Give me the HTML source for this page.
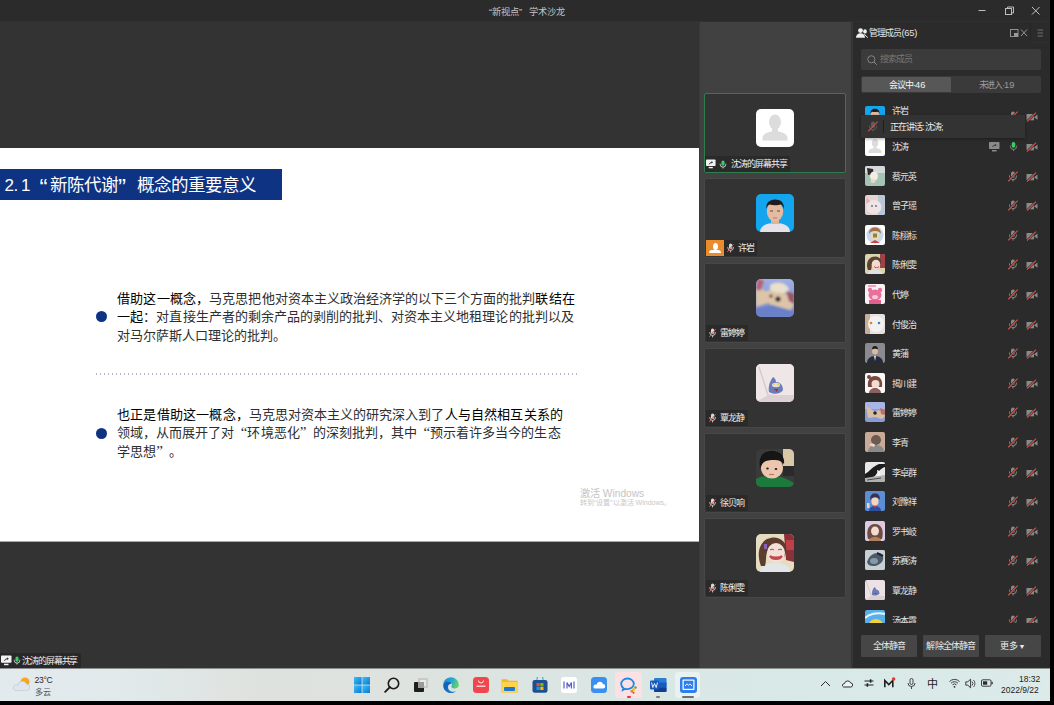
<!DOCTYPE html>
<html lang="zh-CN">
<head>
<meta charset="utf-8">
<style>
*{margin:0;padding:0;box-sizing:border-box}
html,body{width:1054px;height:705px;overflow:hidden;background:#000;font-family:"Liberation Sans",sans-serif}
.abs{position:absolute}
#app{position:absolute;left:0;top:0;width:1050px;height:701px;background:#333;overflow:hidden}
#titlebar{left:0;top:0;width:1050px;height:22px;background:#2b2b2b;border-bottom:1px solid #303030}
.ttl{top:1px;height:22px;line-height:22px;color:#c6c6c6;font-size:9.2px;white-space:nowrap}
#main{left:0;top:22px;width:699px;height:646px;background:#333}
#slide{left:0;top:148px;width:699px;height:394px;background:#fff;border-bottom:1px solid #aaa}
#col{left:699px;top:22px;width:152px;height:646px;background:#414141;border-left:1px solid #383838}
#panel{left:852px;top:22px;width:198px;height:646px;background:#2b2b2b;border-left:1px solid #363636}
#taskbar{left:0;top:668px;width:1050px;height:33px;background:linear-gradient(90deg,#e2eaee 0%,#e1e9eb 12%,#dee2de 25%,#dde3de 40%,#dbe6e4 55%,#d9e8e6 68%,#d8e9e7 80%,#dcebea 100%);border-top:1px solid #8c8f8e}

.slide-title{left:0;top:169px;width:282px;height:31px;background:#0e3383}
.st{position:absolute;color:#fff;font-size:17.5px;line-height:31px;top:0;white-space:nowrap}
.para{position:absolute;left:117px;font-family:"Liberation Serif",serif;font-size:13.06px;line-height:18.3px;color:#2e2e2e;letter-spacing:0.04px;font-weight:350;white-space:nowrap}
.qo{display:inline-block;width:13.1px;text-align:right;font-size:1.15em;line-height:10px}.qc{display:inline-block;width:13.1px;text-align:left;font-size:1.15em;line-height:10px}
.para b{font-weight:500;color:#000;letter-spacing:0.19px}
.bullet{position:absolute;width:11px;height:11px;border-radius:50%;background:#0e3383}
.dots{position:absolute;left:96px;top:373px;width:482px;height:2px;background:repeating-linear-gradient(90deg,#b2b9c7 0 1.5px,transparent 1.5px 4px)}
.wm1{position:absolute;left:580px;top:485px;font-size:10.2px;color:#c4c4c4;white-space:nowrap}
.wm2{position:absolute;left:580px;top:497px;font-size:7px;color:#c8c8c8;white-space:nowrap}

.tile{position:absolute;left:704px;width:142px;height:80px;background:#333;border:1px solid #474747;border-radius:2px}
.tile.act{border-color:#2f7d4d}
.tav{position:absolute;left:51px;top:15px;width:38px;height:38px;border-radius:5px;overflow:hidden}.tav svg{display:block}
.tlab{position:absolute;left:0;bottom:0;height:16px;background:#2a2a2a;color:#eee;font-size:9px;letter-spacing:-0.9px;line-height:16px;white-space:nowrap}
.ph{position:absolute;font-size:9px;line-height:12px;color:#e6e6e6;white-space:nowrap;letter-spacing:-1px}
.srch{left:861px;top:49px;width:180px;height:21px;background:#3b3b3b;border-radius:2px}
.tabs{left:861px;top:76px;width:180px;height:17px;background:#3a3a3a;border-radius:2px}
.tabon{position:absolute;left:1px;top:1px;width:89px;height:15px;background:#575757;border-radius:1px}
.row{position:absolute;left:865px;width:180px;height:20px}
.av{position:absolute;left:0;top:0;width:20px;height:20px;border-radius:2px;overflow:hidden}
.nm{position:absolute;left:27px;top:1px;line-height:20px;font-size:9px;letter-spacing:-1px;color:#e2e2e2;white-space:nowrap}
.ic{position:absolute}
.btn{position:absolute;top:635px;width:56px;height:22px;background:#464646;border-radius:1px;color:#ededed;font-size:9px;letter-spacing:-0.8px;line-height:22px;text-align:center;white-space:nowrap}
.tip{left:861px;top:115px;width:164px;height:23px;background:#333333;box-shadow:0 1px 3px rgba(0,0,0,.35)}

.tb-ico{position:absolute;top:677px;width:16px;height:16px}
.tray{position:absolute}
</style>
</head>
<body>
<svg width="0" height="0" style="position:absolute">
<defs>
<filter id="sb" x="-10%" y="-10%" width="120%" height="120%"><feGaussianBlur stdDeviation="0.45"/></filter>
<symbol id="micoff" viewBox="0 0 10 11"><rect x="3" y="0.5" width="4" height="6.5" rx="2" fill="#8a8a8a"/><path d="M1.5 4.5v0.8a3.5 3.5 0 0 0 7 0v-0.8" stroke="#8a8a8a" stroke-width="1" fill="none"/><path d="M5 8.8v1.7" stroke="#8a8a8a" stroke-width="1"/><path d="M0.3 10.3L9.7 0.6" stroke="#2b2b2b" stroke-width="2.2"/><path d="M0.3 10.3L9.7 0.6" stroke="#dc5548" stroke-width="1.1"/></symbol>
<symbol id="micon" viewBox="0 0 10 11"><rect x="3" y="0.5" width="4" height="6.5" rx="2" fill="#3ccb62"/><path d="M1.5 4.5v0.8a3.5 3.5 0 0 0 7 0v-0.8" stroke="#8a8a8a" stroke-width="1" fill="none"/><path d="M5 8.8v1.7" stroke="#8a8a8a" stroke-width="1"/></symbol>
<symbol id="camoff" viewBox="0 0 12 10"><rect x="0.5" y="2" width="7.5" height="6.3" fill="#8a8a8a"/><path d="M8 5.2L11.5 2.6V7.8Z" fill="#8a8a8a"/><path d="M1 9.6L10 0.6" stroke="#2b2b2b" stroke-width="2.2"/><path d="M1 9.6L10 0.6" stroke="#dc5548" stroke-width="1.1"/></symbol>
<symbol id="share" viewBox="0 0 11 10"><rect x="0" y="0" width="10.5" height="7" rx="0.8" fill="#8a8a8a"/><rect x="3" y="8" width="4.5" height="1.5" fill="#8a8a8a"/><path d="M3.5 5 Q4 3 6.5 3" stroke="#333" stroke-width="0.9" fill="none"/><path d="M6 1.8L7.6 3L6 4.2Z" fill="#333"/></symbol>
<symbol id="shareW" viewBox="0 0 11 10"><rect x="0" y="0" width="10.5" height="7.2" rx="0.8" fill="#f2f2f2"/><rect x="3" y="8.2" width="4.5" height="1.5" fill="#f2f2f2"/><path d="M3.5 5.4 Q4 3.2 6.5 3.2" stroke="#333" stroke-width="1" fill="none"/><path d="M6 1.8L7.8 3.2L6 4.6Z" fill="#333"/></symbol>
<symbol id="micoffW" viewBox="0 0 7 10"><rect x="2" y="0.5" width="3.2" height="5.5" rx="1.6" fill="#d8d8d8"/><path d="M0.8 4v0.6a2.8 2.8 0 0 0 5.6 0v-0.6" stroke="#d8d8d8" stroke-width="0.9" fill="none"/><path d="M3.6 7.6v1.8" stroke="#d8d8d8" stroke-width="0.9"/><path d="M0.3 9L6.6 1.2" stroke="#d9534f" stroke-width="1"/></symbol>
<symbol id="micoffD" viewBox="0 0 10 11"><rect x="3" y="0.5" width="4" height="6.5" rx="2" fill="#5c5c5c"/><path d="M1.5 4.5v0.8a3.5 3.5 0 0 0 7 0v-0.8" stroke="#5c5c5c" stroke-width="1" fill="none"/><path d="M5 8.8v1.7" stroke="#5c5c5c" stroke-width="1"/><path d="M0.3 10.3L9.7 0.6" stroke="#c9504c" stroke-width="1.1"/></symbol>
<symbol id="miconW" viewBox="0 0 10 11"><rect x="3" y="0.5" width="4" height="6.5" rx="2" fill="#3ccb62"/><path d="M1.5 4.5v0.8a3.5 3.5 0 0 0 7 0v-0.8" stroke="#d8d8d8" stroke-width="1.1" fill="none"/><path d="M5 8.8v1.7" stroke="#d8d8d8" stroke-width="1.1"/></symbol>
</defs></svg>
<div id="app">
  <div id="titlebar" class="abs"></div>
  <span class="abs ttl" style="left:489px">“新视点”</span><span class="abs ttl" style="left:528.8px">学术沙龙</span>
  <div id="main" class="abs"></div>
  <div id="slide" class="abs"></div>

  <div class="abs slide-title">
    <span class="st" style="left:4.5px;top:1px;font-size:17px">2</span>
    <span class="st" style="left:13.5px;top:1px;font-size:17px">.</span>
    <span class="st" style="left:21px;top:1px;font-size:17px">1</span>
    <span class="st" style="left:39.5px;top:3px;font-size:24px">“</span>
    <span class="st" style="left:49.5px;top:1px">新陈代谢</span>
    <span class="st" style="left:118px;top:3px;font-size:24px">”</span>
    <span class="st" style="left:137px;top:1px">概念的重要意义</span>
  </div>
  <div class="bullet" style="left:95.5px;top:310.5px"></div>
  <div class="para" style="top:290px"><b>借助这一概念，</b>马克思把他对资本主义政治经济学的以下三个方面的批判<b>联结在</b><br><b>一起</b>：对直接生产者的剩余产品的剥削的批判、对资本主义地租理论的批判以及<br>对马尔萨斯人口理论的批判。</div>
  <div class="dots"></div>
  <div class="bullet" style="left:95.5px;top:427.5px"></div>
  <div class="para" style="top:406px"><b>也正是借助这一概念，</b>马克思对资本主义的研究深入到了<b>人与自然相互关系的</b><br>领域，从而展开了对<span class="qo">“</span>环境恶化<span class="qc">”</span>的深刻批判，其中<span class="qo">“</span>预示着许多当今的生态<br>学思想<span class="qc">”</span>。</div>
  <div class="wm1">激活 Windows</div>
  <div class="wm2">转到“设置”以激活 Windows。</div>
  <div id="col" class="abs"></div>
  <div id="panel" class="abs"></div>
<div class="tile act" style="top:93px"><div class="tav"><svg width="38" height="38" viewBox="0 0 38 38"><rect width="38" height="38" fill="#fff"/><ellipse cx="19" cy="13" rx="6" ry="7.5" fill="#dcdcdc"/><path d="M16.5 19h5l0.8 3.5c5.5 1 9.2 3 9.2 6.5v2.5h-25v-2.5c0-3.5 3.7-5.5 9.2-6.5z" fill="#dcdcdc"/></svg></div><div class="tlab" style="width:85px"><svg class="ic" style="left:1px;top:3px" width="10" height="10"><use href="#shareW"/></svg><svg class="ic" style="left:14px;top:2.5px" width="8" height="11"><use href="#miconW"/></svg><span style="position:absolute;left:25.5px;top:0">沈涛的屏幕共享</span></div></div>
<div class="tile " style="top:178px"><div class="tav"><svg width="38" height="38" viewBox="0 0 38 38"><defs><filter id="bl" x="-10%" y="-10%" width="120%" height="120%"><feGaussianBlur stdDeviation="0.6"/></filter></defs><rect width="38" height="38" fill="#13a6ee"/><g filter="url(#bl)"><path d="M4 38c0-6 6-9 15-9s15 3 15 9z" fill="#e6e2ea"/><rect x="15" y="24" width="8" height="6" fill="#dcb49a"/><ellipse cx="19" cy="17.5" rx="8.2" ry="10" fill="#e4bba0"/><path d="M10.3 15c-0.5-6 3-9.5 8.7-9.5s9.5 3 8.8 9.5c-1-3-2-4.5-3-4.5c-3 1-8 1-11.5 0c-1.3 0.5-2.5 2-3 4.5z" fill="#231c1a"/><path d="M14 17h3M21 17h3" stroke="#503a30" stroke-width="0.9"/><path d="M17 24h4" stroke="#a86a5a" stroke-width="0.8"/></g></svg></div><div style="position:absolute;left:1px;bottom:1px;width:18px;height:16px;background:#e98c2c"><div style="position:absolute;left:6.5px;top:3px;width:5px;height:7px;border-radius:50%;background:#fff"></div><div style="position:absolute;left:3px;top:10px;width:12px;height:3px;border-radius:4px 4px 0 0;background:#fff"></div></div><div class="tlab" style="left:19px;width:33px;bottom:1px"><svg class="ic" style="left:3px;top:3px" width="7" height="10"><use href="#micoffW"/></svg><span style="position:absolute;left:14px;top:0">许岩</span></div></div>
<div class="tile " style="top:263px"><div class="tav"><svg width="38" height="38" viewBox="0 0 38 38"><defs><filter id="b3"><feGaussianBlur stdDeviation="0.8"/></filter><linearGradient id="sk3" x1="0" y1="0" x2="0" y2="1"><stop offset="0" stop-color="#a2b0e4"/><stop offset="1" stop-color="#6f86cc"/></linearGradient></defs><rect width="38" height="38" fill="url(#sk3)"/><g filter="url(#b3)"><path d="M0 8l10 4l8-2l14 6l6 10l-4 6l-12-2l-10-6l-12 4z" fill="#dcc4a8"/><path d="M14 6c6-4 14-3 18 2c2 3 0 6-4 6c-5 0-11-1-14-3z" fill="#eadfcc"/><path d="M2 0l6 2l-4 10l-4-2z" fill="#b86070"/><path d="M30 12l8 3v10l-5-3z" fill="#9a5468"/><circle cx="22" cy="20" r="2.6" fill="#2a2020"/><circle cx="15" cy="17" r="1.6" fill="#3a2a24"/><path d="M0 30l16-4l22 6v6h-38z" fill="#6a80c8"/></g></svg></div><div class="tlab" style="width:42px;bottom:1px;left:1px"><svg class="ic" style="left:3px;top:3px" width="7" height="10"><use href="#micoffW"/></svg><span style="position:absolute;left:14px;top:0">雷婷婷</span></div></div>
<div class="tile " style="top:348px"><div class="tav"><svg width="38" height="38" viewBox="0 0 38 38"><defs><filter id="b4"><feGaussianBlur stdDeviation="0.7"/></filter></defs><rect width="38" height="38" fill="#ece2e4"/><g filter="url(#b4)"><path d="M0 0h38v38h-38z" fill="#efe6e8"/><path d="M3 3l9 28l26 3" fill="none" stroke="#d8cacd" stroke-width="1.5"/><path d="M0 38l12-7h26v7z" fill="#ddd0d3"/><path d="M13 28c-1-6 1-11 4-15c2 1 3 3 3 5c4 0 7 3 7 8c-2 4-9 5-14 2z" fill="#6c7cb4"/><ellipse cx="20" cy="21" rx="4" ry="2.2" fill="#dde0f0"/><circle cx="18" cy="20" r="1" fill="#f0d020"/><circle cx="22" cy="20.5" r="1" fill="#f0d020"/><path d="M18 25l4 0l-1 3z" fill="#c02020"/></g></svg></div><div class="tlab" style="width:42px;bottom:1px;left:1px"><svg class="ic" style="left:3px;top:3px" width="7" height="10"><use href="#micoffW"/></svg><span style="position:absolute;left:14px;top:0">覃龙静</span></div></div>
<div class="tile " style="top:433px"><div class="tav"><svg width="38" height="38" viewBox="0 0 38 38"><defs><filter id="b5"><feGaussianBlur stdDeviation="0.7"/></filter></defs><rect width="38" height="38" fill="#3a3a3a"/><g filter="url(#b5)"><rect x="27" y="0" width="11" height="17" fill="#d8c8a8"/><rect x="27" y="17" width="11" height="10" fill="#2a2a2a"/><path d="M0 30c6-3 12-4 20-3c7 1 13 4 18 7v4h-38z" fill="#1c7a3e"/><ellipse cx="16" cy="19" rx="11" ry="10.5" fill="#ecc6ae"/><path d="M4 19c-2-11 3-17 12-17c8 0 13 5 12 13c-2-3-5-4-9-4c-5 0-9 0-12 3c-1 1-2 3-3 5z" fill="#141212"/><ellipse cx="11.5" cy="19.5" rx="1.3" ry="1.1" fill="#2a1a14"/><ellipse cx="20" cy="20" rx="1.3" ry="1.1" fill="#2a1a14"/><path d="M13 25.5h5" stroke="#c07a6a" stroke-width="1.2"/></g></svg></div><div class="tlab" style="width:42px;bottom:1px;left:1px"><svg class="ic" style="left:3px;top:3px" width="7" height="10"><use href="#micoffW"/></svg><span style="position:absolute;left:14px;top:0">徐贝响</span></div></div>
<div class="tile " style="top:518px"><div class="tav"><svg width="38" height="38" viewBox="0 0 38 38"><defs><filter id="b6"><feGaussianBlur stdDeviation="0.7"/></filter></defs><rect width="38" height="38" fill="#e6dcc2"/><g filter="url(#b6)"><path d="M28 0h10v28l-8-2z" fill="#8a3038"/><path d="M30 6h8v10h-8z" fill="#c04048"/><path d="M4 38c0-6 6-9 15-9s15 3 15 9z" fill="#e2e6e8"/><path d="M5 32c-4-10-3-22 6-27c9-4 17 0 19 7c1 4 0 8-2 11l-3-8c-4-3-11-3-14 3c-1.5 4-0.5 9-2 14z" fill="#5c3e2e"/><ellipse cx="20" cy="19" rx="9" ry="10" fill="#f4dfd6"/><path d="M14 22c2 4 10 4 12 0c-2 2-10 2-12 0z" fill="#c85058" stroke="#c04850" stroke-width="2"/><path d="M14 16c1-1 3-1 4 0M22 16c1-1 3-1 4 0" stroke="#6a4a40" stroke-width="0.9" fill="none"/><rect x="8" y="10" width="3" height="5" fill="#8a64b8"/></g></svg></div><div class="tlab" style="width:42px;bottom:1px;left:1px"><svg class="ic" style="left:3px;top:3px" width="7" height="10"><use href="#micoffW"/></svg><span style="position:absolute;left:14px;top:0">陈俐雯</span></div></div>
<div class="ph" style="left:869px;top:27px;letter-spacing:-0.9px">管理成员<span style="letter-spacing:-0.2px;font-size:9.3px">(65)</span></div>
<svg class="ic" style="left:856px;top:28px" width="13" height="10" viewBox="0 0 13 10"><circle cx="4.5" cy="2.6" r="2.4" fill="#f0f0f0"/><path d="M0 9.8c0-3 2-4.6 4.5-4.6s4.5 1.6 4.5 4.6z" fill="#f0f0f0"/><ellipse cx="9" cy="3.4" rx="1.8" ry="2.2" fill="#f0f0f0"/><path d="M8.2 6.2L11.8 9.6" stroke="#f0f0f0" stroke-width="1"/></svg>
<svg class="ic" style="left:1010px;top:28px" width="34" height="10" viewBox="0 0 34 10"><rect x="0.5" y="1.5" width="7.5" height="7" fill="none" stroke="#9a9a9a" stroke-width="0.9"/><rect x="4" y="5" width="4" height="3.5" fill="#9a9a9a"/><path d="M11 1.5l6 6.5M17 1.5l-6 6.5" stroke="#a0a0a0" stroke-width="0.9"/><path d="M27.5 2h5.5M27.5 5h5.5M27.5 8h5.5" stroke="#8c8c8c" stroke-width="0.7"/></svg>
<div class="abs" style="left:1030px;top:22px;width:1px;height:20px;background:#262626"></div><div class="abs" style="left:1030px;top:42px;width:20px;height:1px;background:#303030"></div>
<div class="abs srch"><svg class="ic" style="left:6px;top:6px" width="11" height="10" viewBox="0 0 11 10"><circle cx="4.3" cy="4.3" r="3.6" fill="none" stroke="#8a8a8a" stroke-width="0.9"/><path d="M7 7l2.8 2.8" stroke="#8a8a8a" stroke-width="1"/></svg><span class="ph" style="left:19px;top:4px;color:#777">搜索成员</span></div>
<div class="abs tabs"><div class="tabon"></div><span class="ph" style="left:28px;top:2.5px;color:#f4f4f4;letter-spacing:-1px">会议中·<span style="letter-spacing:0;font-size:9.3px">46</span></span><span class="ph" style="left:117.5px;top:2.5px;color:#9c9c9c;letter-spacing:-1.1px">未进入·<span style="letter-spacing:0;font-size:9.3px">19</span></span></div>
<div class="abs" style="left:852px;top:100px;width:198px;height:523px;overflow:hidden">
<div class="row" style="left:13px;top:6.3px"><div class="av"><svg width="20" height="20" viewBox="0 0 20 20" style="display:block"><rect width="20" height="20" fill="#13a6ee"/><g filter="url(#sb)"><path d="M2 20c0-3 3-5 8-5s8 2 8 5z" fill="#e6e2ea"/><ellipse cx="10" cy="9.5" rx="4.5" ry="5.5" fill="#e0b89c"/><path d="M5.5 8c-0.3-3.5 1.8-5.2 4.5-5.2s4.8 1.7 4.5 5.2c-0.5-1.5-1.2-2.3-1.8-2.3c-1.6 0.5-4 0.5-5.6 0c-0.6 0.3-1.2 1-1.6 2.3z" fill="#231c1a"/></g></svg></div><div class="nm" style="top:-5px">许岩</div><svg class="ic" style="left:143px;top:5px" width="10" height="11"><use href="#micoff"/></svg><svg class="ic" style="left:161px;top:6px" width="12" height="10"><use href="#camoff"/></svg></div>
<div class="row" style="left:13px;top:35.9px"><div class="av"><svg width="20" height="20" viewBox="0 0 20 20" style="display:block"><rect width="20" height="20" fill="#fff"/><ellipse cx="10" cy="7" rx="3.2" ry="4" fill="#dcdcdc"/><path d="M8.7 10.5h2.6l0.4 1.8c2.9 0.5 4.8 1.6 4.8 3.4v1.3h-13v-1.3c0-1.8 1.9-2.9 4.8-3.4z" fill="#dcdcdc"/></svg></div><div class="nm">沈涛</div><svg class="ic" style="left:124px;top:6px" width="11" height="10"><use href="#share"/></svg><svg class="ic" style="left:144px;top:5px" width="9" height="11"><use href="#micon"/></svg><svg class="ic" style="left:161px;top:6px" width="12" height="10"><use href="#camoff"/></svg></div>
<div class="row" style="left:13px;top:65.5px"><div class="av"><svg width="20" height="20" viewBox="0 0 20 20" style="display:block"><rect width="20" height="20" fill="#a6c4b6"/><g filter="url(#sb)"><rect width="20" height="7" fill="#d6d8da"/><path d="M2 2l6 1l1 5l-6 1z" fill="#2c2c2c"/><ellipse cx="9" cy="10" rx="4" ry="4.5" fill="#f2ece4"/><ellipse cx="8" cy="15" rx="2.5" ry="2" fill="#e8d8c8"/></g></svg></div><div class="nm">蔡元英</div><svg class="ic" style="left:143px;top:5px" width="10" height="11"><use href="#micoff"/></svg><svg class="ic" style="left:161px;top:6px" width="12" height="10"><use href="#camoff"/></svg></div>
<div class="row" style="left:13px;top:95.1px"><div class="av"><svg width="20" height="20" viewBox="0 0 20 20" style="display:block"><rect width="20" height="20" fill="#e4d4d6"/><g filter="url(#sb)"><rect x="13" y="0" width="7" height="20" fill="#b8c8d8"/><ellipse cx="9" cy="12" rx="7.5" ry="7" fill="#f0e4e2"/><path d="M2 2l3 5l-4 1z" fill="#f0a8b0"/><circle cx="7" cy="11" r="0.9" fill="#5a6a90"/><circle cx="11" cy="11" r="0.9" fill="#5a6a90"/></g></svg></div><div class="nm">曾子瑶</div><svg class="ic" style="left:143px;top:5px" width="10" height="11"><use href="#micoff"/></svg><svg class="ic" style="left:161px;top:6px" width="12" height="10"><use href="#camoff"/></svg></div>
<div class="row" style="left:13px;top:124.7px"><div class="av"><svg width="20" height="20" viewBox="0 0 20 20" style="display:block"><rect width="20" height="20" fill="#fdfdfd"/><circle cx="10" cy="10" r="8.5" fill="#c8d8ea"/><g filter="url(#sb)"><path d="M4 9c0-5 3-6.5 6-6.5s6 1.5 6 6.5c-1-2-3-3-6-3s-5 1-6 3z" fill="#a87048"/><ellipse cx="10" cy="11" rx="4" ry="4.2" fill="#f2d4b8"/><rect x="8" y="8.5" width="4" height="4" fill="#7a9040"/><path d="M5 18l5-3l5 3z" fill="#d04040"/></g></svg></div><div class="nm">陈栩标</div><svg class="ic" style="left:143px;top:5px" width="10" height="11"><use href="#micoff"/></svg><svg class="ic" style="left:161px;top:6px" width="12" height="10"><use href="#camoff"/></svg></div>
<div class="row" style="left:13px;top:154.3px"><div class="av"><svg width="20" height="20" viewBox="0 0 20 20" style="display:block"><rect width="20" height="20" fill="#dcd4ae"/><g filter="url(#sb)"><rect x="15" y="0" width="5" height="14" fill="#a04048"/><path d="M3 20c0-3 3-4.5 7-4.5s7 1.5 7 4.5z" fill="#dfe2e4"/><path d="M3 16c-2-5-1-11 4-13c4-1.5 8 0 9 3c0.5 2 0 4-1 5l-2-4c-2-1-5-1-6 2c-0.5 2 0 4-1 7z" fill="#5c4232"/><ellipse cx="11" cy="10.5" rx="4.2" ry="4.8" fill="#f2dcd2"/><path d="M9 12.5c1 1.5 4 1.5 5 0" stroke="#c04850" stroke-width="1" fill="none"/></g></svg></div><div class="nm">陈俐雯</div><svg class="ic" style="left:143px;top:5px" width="10" height="11"><use href="#micoff"/></svg><svg class="ic" style="left:161px;top:6px" width="12" height="10"><use href="#camoff"/></svg></div>
<div class="row" style="left:13px;top:183.9px"><div class="av"><svg width="20" height="20" viewBox="0 0 20 20" style="display:block"><rect width="20" height="20" fill="#f8f2f4"/><g filter="url(#sb)"><circle cx="5" cy="6" r="2.2" fill="#e8709a"/><circle cx="15" cy="6" r="2.2" fill="#e8709a"/><ellipse cx="10" cy="11" rx="6.5" ry="5.5" fill="#e8709a"/><ellipse cx="10" cy="13" rx="3" ry="2" fill="#f4c8d8"/><rect x="4" y="16" width="12" height="4" fill="#e06090"/><rect x="3" y="1" width="8" height="2" fill="#f0a0b8"/></g></svg></div><div class="nm">代婷</div><svg class="ic" style="left:143px;top:5px" width="10" height="11"><use href="#micoff"/></svg><svg class="ic" style="left:161px;top:6px" width="12" height="10"><use href="#camoff"/></svg></div>
<div class="row" style="left:13px;top:213.5px"><div class="av"><svg width="20" height="20" viewBox="0 0 20 20" style="display:block"><rect width="20" height="20" fill="#e6e2de"/><g filter="url(#sb)"><rect x="0" y="0" width="5" height="20" fill="#c8b098"/><ellipse cx="11" cy="10" rx="8" ry="8" fill="#f4f2f0"/><circle cx="6" cy="9" r="1.3" fill="#d08830"/><circle cx="14" cy="9" r="1.3" fill="#4080c0"/></g></svg></div><div class="nm">付俊治</div><svg class="ic" style="left:143px;top:5px" width="10" height="11"><use href="#micoff"/></svg><svg class="ic" style="left:161px;top:6px" width="12" height="10"><use href="#camoff"/></svg></div>
<div class="row" style="left:13px;top:243.1px"><div class="av"><svg width="20" height="20" viewBox="0 0 20 20" style="display:block"><rect width="20" height="20" fill="#8a8a90"/><g filter="url(#sb)"><path d="M2 20c0-4 3-7 8-7s8 3 8 7z" fill="#262a3a"/><path d="M9 13l1 5l1-5z" fill="#e8e8f0"/><ellipse cx="10" cy="8" rx="3" ry="3.6" fill="#e0b8a0"/><path d="M7 6.5c0-2.5 1.5-3.5 3-3.5s3 1 3 3.5c-1-1-5-1-6 0z" fill="#1a1a1a"/></g></svg></div><div class="nm">黄蒲</div><svg class="ic" style="left:143px;top:5px" width="10" height="11"><use href="#micoff"/></svg><svg class="ic" style="left:161px;top:6px" width="12" height="10"><use href="#camoff"/></svg></div>
<div class="row" style="left:13px;top:272.7px"><div class="av"><svg width="20" height="20" viewBox="0 0 20 20" style="display:block"><rect width="20" height="20" fill="#fbf8f8"/><g filter="url(#sb)"><path d="M3 14c-1-7 2-11 7-11s8 4 7 11z" fill="#7a4a40"/><circle cx="4" cy="4" r="2" fill="#7a4a40"/><ellipse cx="10.5" cy="11" rx="4" ry="4" fill="#f4dcd0"/><path d="M4 20c0-3 3-5 6-5s6 2 6 5z" fill="#8a6060"/></g></svg></div><div class="nm">揭川建</div><svg class="ic" style="left:143px;top:5px" width="10" height="11"><use href="#micoff"/></svg><svg class="ic" style="left:161px;top:6px" width="12" height="10"><use href="#camoff"/></svg></div>
<div class="row" style="left:13px;top:302.3px"><div class="av"><svg width="20" height="20" viewBox="0 0 20 20" style="display:block"><rect width="20" height="20" fill="#8a9cd8"/><g filter="url(#sb)"><rect width="20" height="7" fill="#a8b6e6"/><path d="M1 4l8 5l9-1l2 6l-3 3l-7-2l-7 1z" fill="#d8bfa4"/><circle cx="10" cy="11" r="1.8" fill="#302420"/><path d="M15 6l5 2v5l-4-1z" fill="#b87070"/></g></svg></div><div class="nm">雷婷婷</div><svg class="ic" style="left:143px;top:5px" width="10" height="11"><use href="#micoff"/></svg><svg class="ic" style="left:161px;top:6px" width="12" height="10"><use href="#camoff"/></svg></div>
<div class="row" style="left:13px;top:331.9px"><div class="av"><svg width="20" height="20" viewBox="0 0 20 20" style="display:block"><rect width="20" height="20" fill="#c8aa96"/><g filter="url(#sb)"><ellipse cx="11" cy="8" rx="5" ry="5" fill="#6a5a50"/><path d="M3 20c0-4 3-7 8-7s8 3 8 7z" fill="#8a8a8a"/><path d="M4 13c2-2 5-2 6 0l-1 2z" fill="#f0d0d0"/></g></svg></div><div class="nm">李青</div><svg class="ic" style="left:143px;top:5px" width="10" height="11"><use href="#micoff"/></svg><svg class="ic" style="left:161px;top:6px" width="12" height="10"><use href="#camoff"/></svg></div>
<div class="row" style="left:13px;top:361.5px"><div class="av"><svg width="20" height="20" viewBox="0 0 20 20" style="display:block"><rect width="20" height="20" fill="#e8e8e8"/><g filter="url(#sb)"><path d="M0 12c4-2 8-8 14-10l6 0v3c-4 1-8 6-10 9c-3 2-7 3-10 3z" fill="#1e1e1e"/><path d="M12 8c2 0 4 3 3 6l-2 1z" fill="#f4f4f4"/><path d="M0 16l20-3v7h-20z" fill="#b0b0b0"/><path d="M2 18l14-2" stroke="#303030" stroke-width="0.8"/></g></svg></div><div class="nm">李卓群</div><svg class="ic" style="left:143px;top:5px" width="10" height="11"><use href="#micoff"/></svg><svg class="ic" style="left:161px;top:6px" width="12" height="10"><use href="#camoff"/></svg></div>
<div class="row" style="left:13px;top:391.1px"><div class="av"><svg width="20" height="20" viewBox="0 0 20 20" style="display:block"><rect width="20" height="20" fill="#5c8ed6"/><g filter="url(#sb)"><path d="M5 9c0-5 2-6.5 5-6.5s5 1.5 5 6.5c-1-2-3-2.5-5-2.5s-4 0.5-5 2.5z" fill="#3a3050"/><ellipse cx="10" cy="10.5" rx="3.6" ry="4" fill="#f4d6bc"/><path d="M4 20c0-3 2.5-5 6-5s6 2 6 5z" fill="#2a50a0"/><path d="M8 15l2 2l2-2z" fill="#e03030"/><rect x="2" y="12" width="2.5" height="5" fill="#f4d6bc"/></g></svg></div><div class="nm">刘豫祥</div><svg class="ic" style="left:143px;top:5px" width="10" height="11"><use href="#micoff"/></svg><svg class="ic" style="left:161px;top:6px" width="12" height="10"><use href="#camoff"/></svg></div>
<div class="row" style="left:13px;top:420.7px"><div class="av"><svg width="20" height="20" viewBox="0 0 20 20" style="display:block"><rect width="20" height="20" fill="#dccce6"/><g filter="url(#sb)"><path d="M3 18c-2-8 0-15 7-15s9 7 7 15z" fill="#6a5040"/><ellipse cx="10" cy="10" rx="4" ry="4.5" fill="#f4dcd0"/><path d="M4 20c0-3 3-4 6-4s6 1 6 4z" fill="#b08060"/><circle cx="16.5" cy="3.5" r="1.5" fill="#f4b8d0"/></g></svg></div><div class="nm">罗书岐</div><svg class="ic" style="left:143px;top:5px" width="10" height="11"><use href="#micoff"/></svg><svg class="ic" style="left:161px;top:6px" width="12" height="10"><use href="#camoff"/></svg></div>
<div class="row" style="left:13px;top:450.3px"><div class="av"><svg width="20" height="20" viewBox="0 0 20 20" style="display:block"><rect width="20" height="20" fill="#a8b4bc"/><g filter="url(#sb)"><rect width="20" height="20" fill="#c8d0d4"/><path d="M2 12c2-6 6-9 11-9c4 0 6 3 5 7c-2 4-6 6-10 6c-3 0-5-1-6-4z" fill="#4a5a68"/><ellipse cx="9" cy="11" rx="4" ry="3" fill="#8898a8"/><path d="M12 3l6 3" stroke="#202830" stroke-width="2"/></g></svg></div><div class="nm">苏赛涛</div><svg class="ic" style="left:143px;top:5px" width="10" height="11"><use href="#micoff"/></svg><svg class="ic" style="left:161px;top:6px" width="12" height="10"><use href="#camoff"/></svg></div>
<div class="row" style="left:13px;top:479.9px"><div class="av"><svg width="20" height="20" viewBox="0 0 20 20" style="display:block"><rect width="20" height="20" fill="#ece2e6"/><g filter="url(#sb)"><path d="M1 1l5 14l14 2" fill="none" stroke="#d8c8cc" stroke-width="1"/><path d="M0 20l6-4h14v4z" fill="#ddd0d4"/><path d="M7 15c-0.5-3 0.5-6 2.5-8c1 0.5 1.5 1.5 1.5 2.5c2 0 3.5 1.5 3.5 4c-1 2-5 2.5-7.5 1.5z" fill="#6c7cb4"/><path d="M9.5 13l2 0l-0.5 1.5z" fill="#c02020"/></g></svg></div><div class="nm">覃龙静</div><svg class="ic" style="left:143px;top:5px" width="10" height="11"><use href="#micoff"/></svg><svg class="ic" style="left:161px;top:6px" width="12" height="10"><use href="#camoff"/></svg></div>
<div class="row" style="left:13px;top:509.5px"><div class="av"><svg width="20" height="20" viewBox="0 0 20 20" style="display:block"><rect width="20" height="20" fill="#58b0ea"/><g filter="url(#sb)"><path d="M0 8c4-4 12-6 20-4" stroke="#e8f4fc" stroke-width="2" fill="none"/><ellipse cx="11" cy="15" rx="7" ry="6" fill="#f4d040"/><circle cx="9" cy="14" r="0.8" fill="#202020"/><path d="M4 20l3-6l2 6z" fill="#e07030"/></g></svg></div><div class="nm">汤本霞</div><svg class="ic" style="left:143px;top:5px" width="10" height="11"><use href="#micoff"/></svg><svg class="ic" style="left:161px;top:6px" width="12" height="10"><use href="#camoff"/></svg></div>
</div>
<div class="abs tip"><svg class="ic" style="left:7px;top:6px" width="10" height="11"><use href="#micoffD"/></svg><div class="abs" style="left:21.5px;top:5px;width:1px;height:13px;background:#1c2026"></div><span class="ph" style="left:29px;top:5.5px;color:#ececec">正在讲话: 沈涛;</span></div>
<div class="btn" style="left:861px">全体静音</div><div class="btn" style="left:923px">解除全体静音</div><div class="btn" style="left:985px">更多 <span style="font-size:7px;letter-spacing:0">▼</span></div>
  <div id="taskbar" class="abs"></div>

  <div class="abs" style="left:0;top:653px;width:81px;height:15px;background:#282828"></div>
  <svg class="ic" style="left:1px;top:655px" width="11" height="11"><use href="#shareW"/></svg>
  <svg class="ic" style="left:12.5px;top:655px" width="8" height="11"><use href="#miconW"/></svg>
  <span class="ph" style="left:22px;top:654.5px;color:#eee;letter-spacing:-1.1px">沈涛的屏幕共享</span>

  <!-- weather -->
  <svg class="ic" style="left:12px;top:676px" width="20" height="16" viewBox="0 0 20 16">
    <circle cx="13" cy="6" r="4.5" fill="#f5a623"/>
    <path d="M3 14.5h11.5a3.2 3.2 0 0 0 0-6.4a4.5 4.5 0 0 0-8.6 1A2.8 2.8 0 0 0 3 14.5z" fill="#dfe6ee" stroke="#b8c4d0" stroke-width="0.6"/>
  </svg>
  <span class="abs" style="left:34.5px;top:674.5px;font-size:8.6px;color:#2a2a2a;white-space:nowrap;letter-spacing:-0.3px">23°C</span>
  <span class="abs" style="left:35px;top:685.5px;font-size:8px;color:#5a5a5a;white-space:nowrap">多云</span>
  <!-- start -->
  <svg class="ic" style="left:354px;top:677px" width="16" height="16" viewBox="0 0 16 16">
    <defs><linearGradient id="wg" x1="0" y1="0" x2="1" y2="1"><stop offset="0" stop-color="#3ec0f5"/><stop offset="1" stop-color="#0a78d6"/></linearGradient></defs>
    <rect x="0" y="0" width="7.6" height="7.6" fill="url(#wg)"/><rect x="8.4" y="0" width="7.6" height="7.6" fill="url(#wg)"/>
    <rect x="0" y="8.4" width="7.6" height="7.6" fill="url(#wg)"/><rect x="8.4" y="8.4" width="7.6" height="7.6" fill="url(#wg)"/>
  </svg>
  <!-- search -->
  <svg class="ic" style="left:384px;top:677px" width="16" height="16" viewBox="0 0 16 16">
    <circle cx="9.5" cy="6.5" r="5.2" fill="none" stroke="#1b1b1b" stroke-width="1.6"/><path d="M5.8 10.2L1.2 14.8" stroke="#1b1b1b" stroke-width="1.9" stroke-linecap="round"/>
  </svg>
  <!-- task view -->
  <svg class="ic" style="left:413px;top:677px" width="16" height="16" viewBox="0 0 16 16">
    <rect x="5" y="1" width="10" height="10" rx="1" fill="#c9c9c9"/><rect x="7" y="3" width="6" height="6" fill="#e8e8e8"/>
    <rect x="1" y="5" width="10" height="10" rx="1" fill="#1e1e1e"/><rect x="5" y="5" width="6" height="6" fill="#9a9a9a"/>
  </svg>
  <!-- edge -->
  <svg class="ic" style="left:443px;top:677px" width="16" height="16" viewBox="0 0 16 16">
    <defs><linearGradient id="eg" x1="0" y1="0" x2="1" y2="0.3"><stop offset="0" stop-color="#1c8ad6"/><stop offset="0.55" stop-color="#22a6dc"/><stop offset="1" stop-color="#60d06a"/></linearGradient>
    <linearGradient id="eg2" x1="0" y1="0" x2="1" y2="1"><stop offset="0" stop-color="#0d5ab0"/><stop offset="1" stop-color="#1a80d6"/></linearGradient></defs>
    <path d="M8 0.2a7.8 7.8 0 0 1 7.8 7.8c0 2.2-1.8 3.6-4 3.6c-1.8 0-3.4-0.8-3.4-2.2c0-0.6 0.5-0.9 0.5-1.6c0-1.8-1.8-3.1-4-3.1c-2.6 0-4.6 1.9-4.7 4.3a7.8 7.8 0 0 1 7.8-8.8z" fill="url(#eg)"/>
    <path d="M0.2 8.7c0.1-2.4 2.1-4.3 4.7-4.3c1.8 0 3.2 0.9 3.7 2.2c-2.2 0.2-3.6 1.8-3.6 3.6c0 2.4 2.2 4.6 5.4 4.6c0.9 0 1.8-0.2 2.6-0.5a7.8 7.8 0 0 1-12.8-5.6z" fill="url(#eg2)"/>
  </svg>
  <!-- huawei appgallery -->
  <svg class="ic" style="left:472.5px;top:677px" width="16" height="16" viewBox="0 0 16 16">
    <rect x="0" y="0" width="16" height="16" rx="3.5" fill="#f0464e"/><path d="M5.5 3.5a2.5 2.5 0 0 0 5 0" stroke="#fff" stroke-width="0.9" fill="none"/><rect x="3.5" y="8.5" width="9" height="1.4" fill="#fbd6d8"/>
  </svg>
  <!-- explorer -->
  <svg class="ic" style="left:501px;top:677px" width="17" height="16" viewBox="0 0 17 16">
    <path d="M0.5 2.2h5.5l1.6 1.6h9v11.7h-16.1z" fill="#f2b820"/><rect x="0.5" y="5" width="16" height="10.5" fill="#ffd34e"/><rect x="3" y="10" width="11" height="4" rx="1" fill="#1e78d0"/>
  </svg>
  <!-- store -->
  <svg class="ic" style="left:532px;top:677px" width="16" height="16" viewBox="0 0 16 16">
    <path d="M5 3V2a3 3 0 0 1 6 0v1" fill="none" stroke="#4ca8e8" stroke-width="1.1"/>
    <rect x="0.5" y="3" width="15" height="12.8" rx="2.2" fill="#1f4f8f"/>
    <rect x="4.5" y="6" width="3.2" height="3.2" fill="#f25022"/><rect x="8.3" y="6" width="3.2" height="3.2" fill="#7fba00"/>
    <rect x="4.5" y="9.8" width="3.2" height="3.2" fill="#00a4ef"/><rect x="8.3" y="9.8" width="3.2" height="3.2" fill="#ffb900"/>
  </svg>
  <!-- imi -->
  <svg class="ic" style="left:561px;top:677px" width="16" height="16" viewBox="0 0 16 16">
    <rect x="0" y="0" width="16" height="16" rx="3" fill="#ffffff"/><path d="M3 4.5v7M6 11.5v-6l2.2 4l2.2-4v6M13 4.5v7" stroke="#5660c8" stroke-width="1.2" fill="none"/>
  </svg>
  <!-- cloud -->
  <svg class="ic" style="left:591px;top:677px" width="16" height="16" viewBox="0 0 16 16">
    <rect x="0" y="0" width="16" height="16" rx="3.5" fill="#3b8ff0"/><path d="M3.5 11.5h8.5a2.3 2.3 0 0 0 0-4.6a3.4 3.4 0 0 0-6.5 0.9a1.9 1.9 0 0 0-2 3.7z" fill="#fff"/>
  </svg>
  <!-- wecom highlight -->
  <div class="abs" style="left:615px;top:671.5px;width:27px;height:26px;background:#fbe1e3;border-radius:3px"></div>
  <svg class="ic" style="left:620px;top:677px" width="18" height="17" viewBox="0 0 18 17">
    <path d="M7.5 1.5c3.5 0 6.3 2.4 6.3 5.3s-2.8 5.3-6.3 5.3c-0.8 0-1.5-0.1-2.2-0.3l-2.5 1.2l0.5-2a5.2 5.2 0 0 1-2.1-4.2c0-2.9 2.8-5.3 6.3-5.3z" fill="none" stroke="#1e88e5" stroke-width="1.8"/>
    <circle cx="13.5" cy="12.5" r="1.5" fill="#fbbd08"/><circle cx="15.5" cy="10.5" r="1.3" fill="#4caf50"/><circle cx="11.8" cy="14.3" r="1.3" fill="#f57c00"/><circle cx="13.5" cy="15.8" r="1" fill="#e53935"/>
  </svg>
  <div class="abs" style="left:627px;top:695.5px;width:4px;height:2px;border-radius:1px;background:#e23838"></div>
  <!-- word -->
  <svg class="ic" style="left:650px;top:677px" width="17" height="16" viewBox="0 0 17 16">
    <rect x="4" y="1" width="12.5" height="14" rx="1.2" fill="#2b7cd3"/><rect x="4" y="5.5" width="12.5" height="5" fill="#185abd"/><rect x="4" y="10.5" width="12.5" height="4.5" rx="1" fill="#103f91"/>
    <rect x="0" y="3.5" width="9" height="9" rx="1" fill="#185abd"/><path d="M1.5 5.5l1.3 5l1.7-4l1.7 4l1.3-5" stroke="#fff" stroke-width="0.9" fill="none"/>
  </svg>
  <div class="abs" style="left:656px;top:695.5px;width:4px;height:2px;border-radius:1px;background:#7a7f80"></div>
  <!-- tencent meeting highlight -->
  <div class="abs" style="left:675px;top:672px;width:25px;height:26px;background:#e9f1f1;border-radius:3px"></div>
  <svg class="ic" style="left:679.5px;top:677px" width="17" height="16" viewBox="0 0 17 16">
    <rect x="0" y="0" width="17" height="16" rx="3" fill="#2f7ef0"/><rect x="2.5" y="2.5" width="12" height="10.5" rx="1" fill="#fff"/><rect x="3.7" y="3.7" width="9.6" height="8.1" fill="#2f7ef0"/>
    <path d="M5 9l2-2.2l1.5 1.6l1.5-1.6l2 2.2" stroke="#fff" stroke-width="0.9" fill="none"/>
  </svg>
  <div class="abs" style="left:681.5px;top:695.5px;width:12px;height:2px;border-radius:1px;background:#6b7275"></div>
  <!-- tray -->
  <svg class="ic" style="left:820px;top:680px" width="11" height="7" viewBox="0 0 11 7"><path d="M1 6l4.5-4.5L10 6" stroke="#2a2a2a" stroke-width="1" fill="none"/></svg>
  <svg class="ic" style="left:840.5px;top:679px" width="12" height="9" viewBox="0 0 12 9"><path d="M2.5 8h7a2 2 0 0 0 0.3-4a3.3 3.3 0 0 0-6.3 0.6a1.8 1.8 0 0 0-1 3.4z" fill="#eef2f2" stroke="#303030" stroke-width="1"/></svg>
  <svg class="ic" style="left:863.5px;top:678px" width="10" height="10" viewBox="0 0 10 10"><path d="M0.5 3h9M0.5 7h9" stroke="#222" stroke-width="1.1"/><rect x="5.8" y="1.3" width="1.6" height="3.4" fill="#222"/><rect x="2.6" y="5.3" width="1.6" height="3.4" fill="#222"/></svg>
  <svg class="ic" style="left:883.5px;top:677px" width="12" height="11" viewBox="0 0 12 11"><path d="M0.8 10.2V3.5l4 4l4-4v6.7" fill="none" stroke="#222" stroke-width="1.6"/><circle cx="9.6" cy="2" r="1.8" fill="#e8392e"/></svg>
  <svg class="ic" style="left:907px;top:678px" width="9" height="12" viewBox="0 0 9 12"><rect x="3" y="0.5" width="3" height="6" rx="1.5" fill="none" stroke="#333" stroke-width="0.9"/><path d="M1 5a3.5 3.5 0 0 0 7 0M4.5 8.5v2.5" fill="none" stroke="#333" stroke-width="0.9"/></svg>
  <span class="abs" style="left:927px;top:675px;font-size:11px;color:#222">中</span>
  <svg class="ic" style="left:948.5px;top:678px" width="11" height="10" viewBox="0 0 11 10"><path d="M0.5 3.5a7 7 0 0 1 10 0M2 5.2a5 5 0 0 1 7 0M3.5 6.8a3 3 0 0 1 4 0" fill="none" stroke="#2a2a2a" stroke-width="0.9"/><circle cx="5.5" cy="8.8" r="0.9" fill="#2a2a2a"/></svg>
  <svg class="ic" style="left:964.5px;top:678px" width="11" height="11" viewBox="0 0 11 11"><path d="M0.8 3.8h2l2.8-2.6v8.6l-2.8-2.6h-2z" fill="none" stroke="#2a2a2a" stroke-width="0.9"/><path d="M7 3.5a2.8 2.8 0 0 1 0 4M8.5 2a5 5 0 0 1 0 7" fill="none" stroke="#2a2a2a" stroke-width="0.8"/></svg>
  <svg class="ic" style="left:981px;top:679px" width="12" height="8" viewBox="0 0 12 8"><rect x="0.5" y="0.8" width="9.5" height="6.4" rx="1.2" fill="none" stroke="#2a2a2a" stroke-width="0.9"/><rect x="2" y="2.3" width="4.2" height="3.4" fill="#2a2a2a"/><rect x="10.5" y="2.8" width="1.2" height="2.4" fill="#2a2a2a"/></svg>
  <span class="abs" style="left:1019px;top:674px;font-size:8.5px;color:#222;white-space:nowrap">18:32</span>
  <span class="abs" style="left:1001px;top:684.5px;font-size:8.5px;color:#222;white-space:nowrap">2022/9/22</span>
  <!-- title bar buttons -->
  <svg class="ic" style="left:975px;top:5px" width="70" height="12" viewBox="0 0 70 12">
    <path d="M3.5 5.5h7" stroke="#bdbdbd" stroke-width="1"/>
    <rect x="30.5" y="3.5" width="6" height="6" fill="none" stroke="#bdbdbd" stroke-width="1"/>
    <path d="M32.5 3.5v-1.5h6v6h-1.5" fill="none" stroke="#bdbdbd" stroke-width="1"/>
    <path d="M57 2l7.5 7.5M64.5 2L57 9.5" stroke="#c4c4c4" stroke-width="1"/>
  </svg>

</div>
</body>
</html>
